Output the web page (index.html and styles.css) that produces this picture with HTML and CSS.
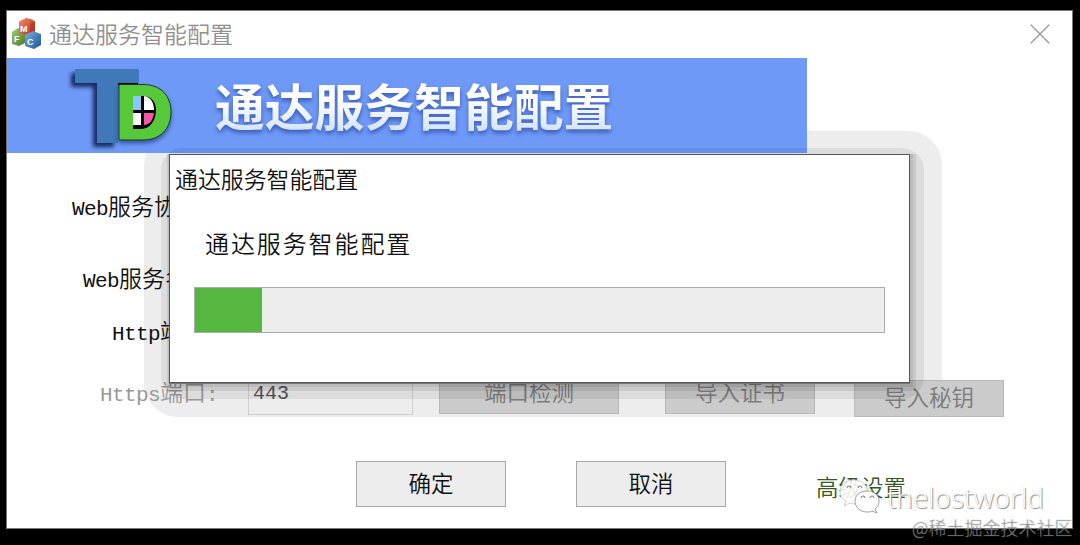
FILE: index.html
```html
<!DOCTYPE html>
<html lang="zh-CN">
<head>
  <meta charset="UTF-8" />
  <meta name="viewport" content="width=device-width, initial-scale=1.0"/>
  <title>通达服务智能配置</title>
  <link rel="stylesheet" href="styles.css">
</head>
<body>

  <div class="window">
    <header class="titlebar">
      <svg class="app-icon" width="30" height="32" viewBox="0 0 30 32">
        <defs>
          <linearGradient id="red" x1="0" y1="0" x2="1" y2="1"><stop offset="0" stop-color="#f58a68"/><stop offset="1" stop-color="#b52d17"/></linearGradient>
          <linearGradient id="green" x1="0" y1="0" x2="1" y2="1"><stop offset="0" stop-color="#a9cc75"/><stop offset="1" stop-color="#47792a"/></linearGradient>
          <linearGradient id="blue" x1="0" y1="0" x2="1" y2="1"><stop offset="0" stop-color="#79b4e4"/><stop offset="1" stop-color="#195294"/></linearGradient>
        </defs>
        <path d="M1 14 L7 10 L14 13 V25 L8 28 L1 26 Z" fill="url(#green)"/>
        <path d="M8 4 Q8 3 15 0 Q23 1 24 4 V14 L18 18 L8 15 Z" fill="url(#red)"/>
        <path d="M19 6 L24 3 V14 L19 18 Z" fill="#a82d18" opacity=".55"/>
        <path d="M14 17 L22 13 L30 16 V27 L23 31 L14 28 Z" fill="url(#blue)"/>
        <text x="9" y="14" class="cube-letter">M</text>
        <text x="3" y="24" class="cube-letter">F</text>
        <text x="16" y="27" class="cube-letter">C</text>
      </svg>
      <span class="titlebar-text">通达服务智能配置</span>
      <svg class="close" width="20" height="20" viewBox="0 0 20 20">
        <path d="M.8 .8 L19.2 19.2 M19.2 .8 L.8 19.2" fill="none" stroke="#999" stroke-width="1.3"/>
      </svg>
    </header>

    <div class="banner">
      <svg class="logo" width="112" height="88" viewBox="0 0 112 88">
        <path class="logo-t" d="M11 6 H75 V20 H54 V80 H33 V20 H11 Z" fill="#4079b9"/>
        <path d="M54 20 H74 V22 H54 Z" fill="#000"/>
        <path class="logo-d" d="M55 21.500 H79 C97 21.500 107 33 107 49 C107 66 96 77 79 77 H55 Z" fill="#58c83b" stroke="#173b2b" stroke-width="1"/>
        <path d="M69 33 H79 C88 33 92 40 92 47 C92 57 86 66 77 66 H69 Z" fill="#000"/>
        <path d="M69 33 H77 V47 H69 Z" fill="#88c8f8"/>
        <path d="M80 33 C87 34 90 40 90 47 H80 Z" fill="#fff"/>
        <path d="M69 50 H77 V62 H69 Z" fill="#fff"/>
        <path d="M80 50 H90 C89 57 86 62 80 62 Z" fill="#f058a6"/>
      </svg>
      <h1>通达服务智能配置</h1>
    </div>

    <div class="form">
      <div class="row row-protocol"><label><span class="latin">Web</span>服务协议<span class="latin">:</span></label></div>
      <div class="row row-name"><label><span class="latin">Web</span>服务名<span class="latin">:</span></label></div>
      <div class="row row-http"><label><span class="latin">Http</span>端口<span class="latin">:</span></label></div>
      <div class="row row-https">
        <label><span class="latin">Https</span>端口<span class="latin">:</span></label>
        <div class="field">443</div>
        <button class="btn check" disabled>端口检测</button>
        <button class="btn" disabled>导入证书</button>
        <button class="btn key" disabled>导入秘钥</button>
      </div>
    </div>

    <div class="actions">
      <button class="btn">确定</button>
      <button class="btn">取消</button>
      <a class="advanced">高级设置</a>
    </div>

    <div class="halo"></div>
  </div>

  <div class="shade"></div>

  <div class="dialog">
    <div class="dialog-title">通达服务智能配置</div>
    <p class="dialog-text">通达服务智能配置</p>
    <div class="progress"><div class="progress-bar"></div></div>
  </div>

  <div class="watermark">
    <svg width="41" height="36" viewBox="0 0 41 36">
      <path d="M15 1 C6 1 1 6 1 13 C1 17 3 20 7 22 L5 27 L11 24 C13 25 16 25 18 25 C26 24 29 19 29 13 C29 6 23 1 15 1 Z" fill="#fff" fill-opacity=".88" stroke="#bbb" stroke-width=".7"/>
      <path d="M28 12 C20 12 16 17 16 22 C16 28 21 33 28 33 C30 33 32 33 33 32 L38 34 L36 30 C39 28 40 25 40 22 C40 16 35 12 28 12 Z" fill="#fff" stroke="#888" stroke-width=".8"/>
      <path d="M8 9 a2 2 0 0 1 4 0 M19 9 a2 2 0 0 1 4 0 M22 19 a2 2 0 0 1 4 0 M31 19 a2 2 0 0 1 4 0" fill="none" stroke="#777" stroke-width="1"/>
    </svg>
    <span>thelostworld</span>
  </div>
  <div class="community">@稀土掘金技术社区</div>

</body>
</html>
```

FILE: styles.css
```css
* {
  margin: 0;
  padding: 0;
  box-sizing: border-box;
}

body {
  width: 1080px;
  height: 545px;
  padding: 10px 6px;
  background: #000;
  overflow: hidden;
  position: relative;
  font-family: "Noto Sans CJK SC", sans-serif;
  font-size: 23px;
}

.window {
  width: 1067px;
  height: 519px;
  background: #fff;
  border: 1px solid #777;
  position: relative;
  z-index: 0;
}

.titlebar {
  height: 47px;
  padding: 0 22px 0 4px;
  display: flex;
  align-items: center;
}

.app-icon {
  margin-top: -2px;
}

.cube-letter {
  font: bold 9px "Liberation Sans", sans-serif;
  fill: #fff;
}

.titlebar-text {
  margin: -3px 0 0 8px;
  flex: 1;
  font: 350 23px/46px "Noto Sans CJK SC", sans-serif;
  color: #909090;
}

.close {
  margin-top: -2px;
}

.banner {
  width: 800px;
  height: 95px;
  padding-left: 57px;
  background: #6f99f7;
  display: flex;
}

.logo {
  margin-top: 5px;
}

.logo-t {
  filter: drop-shadow(-4px 4px 2px #172b60);
}

.logo-d {
  filter: drop-shadow(0 3px 2px rgba(20, 40, 110, .6));
}

h1 {
  margin-left: 39px;
  font: bold 49.800px/93px "Noto Sans CJK SC", sans-serif;
  background: linear-gradient(#fff 45%, #d2e2fa 78%);
  background-clip: text;
  -webkit-background-clip: text;
  color: transparent;
  filter: drop-shadow(0 3px 2px rgba(35, 65, 155, .7));
  white-space: nowrap;
}

.form {
  height: 264px;
  padding-top: 34px;
}

.row {
  height: 36px;
  display: flex;
}

label {
  font-size: 23px;
  font-weight: 350;
  line-height: 36px;
  color: #111;
  white-space: nowrap;
}

.latin {
  font-family: "Liberation Mono", monospace;
  font-size: 21px;
  letter-spacing: -.6px;
}

.row-protocol {
  padding-left: 65px;
  margin-bottom: 36px;
}

.row-name {
  padding-left: 76px;
  margin-bottom: 17px;
}

.row-http {
  padding-left: 105px;
  margin-bottom: 20px;
}

.row-https {
  height: 48px;
  padding-left: 93px;
  align-items: flex-start;
}

.row-https label {
  width: 148px;
  line-height: 47px;
  color: #999;
}

.field {
  width: 165px;
  height: 47px;
  margin-right: 26px;
  padding-left: 4px;
  border: 1px solid #d0d0d0;
  font: 20px/50px "Liberation Mono", monospace;
  color: #555;
}

.btn {
  width: 150px;
  height: 46px;
  border: 1px solid #a8a8a8;
  background: #ededed;
  color: #111;
  font: 350 22.500px/38px "Noto Sans CJK SC", sans-serif;
  padding-bottom: 5px;
}

.btn:disabled {
  height: 46px;
  margin-right: 39px;
  padding-bottom: 0;
  border-color: #b8b8b8;
  background: #cbcbcb;
  color: #7b7b7b;
}

.check:disabled {
  width: 180px;
  margin-right: 46px;
}

.key:disabled {
  height: 37px;
  margin-top: 12px;
  padding-bottom: 5px;
  line-height: 30px;
}

.actions {
  margin-top: 44px;
  padding-left: 349px;
  display: flex;
  gap: 70px;
}

.advanced {
  margin-left: 20px;
  font: 350 22.500px/50px "Noto Sans CJK SC", sans-serif;
  color: #365824;
}

.halo {
  position: absolute;
  left: 137px;
  top: 120px;
  width: 798px;
  height: 286px;
  border-radius: 34px;
  background: #ededed;
  z-index: -1;
}

/* stepped shadow under the dialog */
.shade {
  position: absolute;
  left: 161px;
  top: 148px;
  width: 763px;
  height: 251px;
  border-radius: 22px;
  background: rgba(0, 0, 0, .07);
}

.dialog {
  position: absolute;
  left: 169px;
  top: 154px;
  width: 741px;
  height: 229px;
  padding: 0 24px 0 25px;
  background: #fff;
  border: 1px solid #555;
  box-shadow:
    0 1px 0 #777,
    1px 2px 0 2px rgba(0, 0, 0, .07),
    2px 4px 0 4px rgba(0, 0, 0, .08);
}

.dialog-title {
  margin-left: -20px;
  font: 350 22.900px/46px "Noto Sans CJK SC", sans-serif;
  color: #111;
}

.dialog-text {
  margin: 19px 0 0 10px;
  font: 350 24px/46px "Noto Sans CJK SC", sans-serif;
  letter-spacing: 1.900px;
  color: #111;
}

.progress {
  height: 46px;
  margin: 21px 0 0 -1px;
  border: 1px solid #aaa;
  background: #ededed;
}

.progress-bar {
  width: 67px;
  height: 100%;
  background: #55b740;
}

.watermark {
  position: absolute;
  left: 839px;
  top: 479px;
  display: flex;
  gap: 7px;
  font: 300 28px/36px "Open Sans", sans-serif;
  color: #fff;
  text-shadow: 1px 1px 1px #888, 0 0 1px #ccc;
}

.community {
  position: absolute;
  left: 912px;
  top: 514px;
  font: 300 18px/26px "Noto Sans CJK SC", sans-serif;
  color: rgba(255, 255, 255, .25);
  text-shadow: 0 0 1px #666;
  white-space: nowrap;
}
```
